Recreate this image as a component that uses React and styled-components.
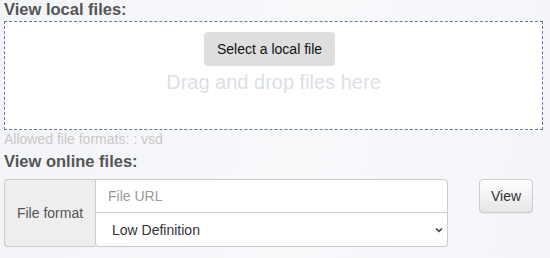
import React from 'react'
import styled, { createGlobalStyle } from 'styled-components'

const Global = createGlobalStyle`
  html, body {
    margin: 0;
    padding: 0;
  }
  body {
    width: 550px;
    height: 258px;
    overflow: hidden;
    font-family: "Liberation Sans", Arial, sans-serif;
    background: linear-gradient(100deg, #f3f4f7 0%, #f8f9fb 55%, #f4f5f8 100%);
  }
`;

const Page = styled.div`
  padding: 0 7px 0 4px;
`;

const Heading = styled.h3`
  margin: 0 0 3px;
  font-size: 16.5px;
  line-height: 18px;
  font-weight: bold;
  color: #555;
`;

const DropZone = styled.div`
  height: 109px;
  box-sizing: border-box;
  border: 1px dashed #6b70a8;
  background: #fff;
  display: flex;
  flex-direction: column;
  align-items: center;
  padding-top: 10px;
`;

const SelectButton = styled.button`
  width: 131px;
  height: 34px;
  margin-right: 8px;
  border: none;
  border-radius: 4px;
  background: #dedede;
  color: #111;
  font-family: inherit;
  font-size: 14px;
  padding: 0;
`;

const DropHint = styled.div`
  margin-top: 4px;
  font-size: 20px;
  line-height: 24px;
  color: #dcdfe6;
`;

const Allowed = styled.div`
  margin-top: 1px;
  font-size: 14px;
  line-height: 16px;
  color: #c8c8c8;
`;

const OnlineHeading = styled(Heading)`
  margin: 5px 0 9px;
`;

const Row = styled.div`
  display: flex;
  align-items: flex-start;
`;

const Group = styled.div`
  width: 444px;
  height: 68px;
  display: flex;
`;

const Addon = styled.div`
  width: 91px;
  box-sizing: border-box;
  border: 1px solid #ccc;
  border-right: none;
  border-radius: 4px 0 0 4px;
  background: #eee;
  color: #555;
  font-size: 14px;
  display: flex;
  align-items: center;
  justify-content: center;
`;

const Fields = styled.div`
  flex: 1;
  display: flex;
  flex-direction: column;
`;

const UrlInput = styled.input`
  height: 34px;
  box-sizing: border-box;
  border: 1px solid #ccc;
  border-radius: 0 4px 0 0;
  background: #fff;
  padding: 0 12px;
  font-family: inherit;
  font-size: 14px;
  color: #555;
  outline: none;
  &::placeholder {
    color: #999;
  }
`;

const Select = styled.div`
  height: 34px;
  box-sizing: border-box;
  border: 1px solid #ccc;
  border-top: none;
  border-radius: 0 0 4px 4px;
  background: #fff;
  padding: 0 4px 0 16px;
  font-size: 14px;
  color: #333;
  display: flex;
  align-items: center;
  justify-content: space-between;
`;

const ViewButton = styled.button`
  margin-left: 31px;
  width: 54px;
  height: 34px;
  box-sizing: border-box;
  border: 1px solid #ccc;
  border-radius: 4px;
  background: linear-gradient(#fff, #e6e6e6);
  box-shadow: 0 1px 1px rgba(0, 0, 0, 0.05);
  color: #333;
  font-family: inherit;
  font-size: 14px;
  padding: 0;
`;

const Chevron = () => (
  <svg width="8" height="6" viewBox="0 0 8 6">
    <path d="M1 1.5 L4 4.3 L7 1.5" fill="none" stroke="#444" strokeWidth="1.7" />
  </svg>
);

const App = () => {
  return (
    <>
      <Global />
      <Page>
        <Heading>View local files:</Heading>
        <DropZone>
          <SelectButton>Select a local file</SelectButton>
          <DropHint>Drag and drop files here</DropHint>
        </DropZone>
        <Allowed>Allowed file formats: : vsd</Allowed>
        <OnlineHeading>View online files:</OnlineHeading>
        <Row>
          <Group>
            <Addon>File format</Addon>
            <Fields>
              <UrlInput placeholder="File URL" />
              <Select>
                <span>Low Definition</span>
                <Chevron />
              </Select>
            </Fields>
          </Group>
          <ViewButton>View</ViewButton>
        </Row>
      </Page>
    </>
  )
}

export default App
